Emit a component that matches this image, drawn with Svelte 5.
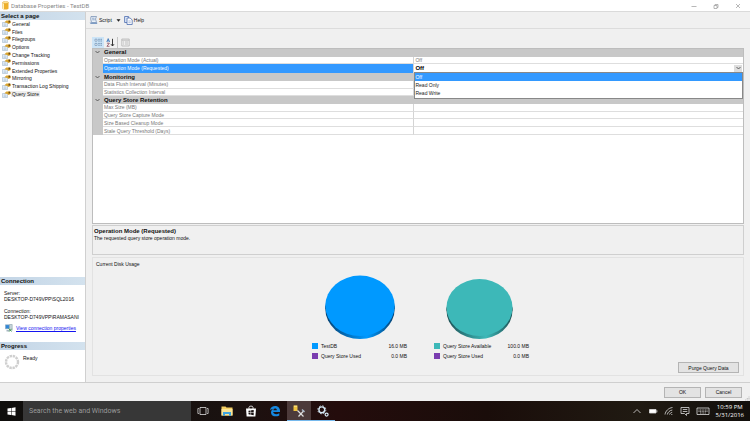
<script>
  const pages = [
    "General",
    "Files",
    "Filegroups",
    "Options",
    "Change Tracking",
    "Permissions",
    "Extended Properties",
    "Mirroring",
    "Transaction Log Shipping",
    "Query Store",
  ];

  const rows = [
    { group: "General" },
    { name: "Operation Mode (Actual)", value: "Off" },
    { name: "Operation Mode (Requested)", editor: true },
    { group: "Monitoring" },
    { name: "Data Flush Interval (Minutes)" },
    { name: "Statistics Collection Interval" },
    { group: "Query Store Retention" },
    { name: "Max Size (MB)" },
    { name: "Query Store Capture Mode" },
    { name: "Size Based Cleanup Mode" },
    { name: "Stale Query Threshold (Days)" },
  ];

  const modes = ["Off", "Read Only", "Read Write"];

  const charts = [
    {
      id: "db",
      color: "#0099ff",
      dark: "#07406f",
      cx: 36,
      rx: 34.7,
      ry: 30.2,
      items: [
        { label: "TestDB", size: "16.0 MB", color: "#0099ff" },
        { label: "Query Store Used", size: "0.0 MB", color: "#7a3db0" },
      ],
    },
    {
      id: "qs",
      color: "#3db8b8",
      dark: "#1d5054",
      cx: 33.5,
      rx: 33,
      ry: 28.5,
      items: [
        { label: "Query Store Available", size: "100.0 MB", color: "#3db8b8" },
        { label: "Query Store Used", size: "0.0 MB", color: "#7a3db0" },
      ],
    },
  ];

  let page = $state("Query Store");
  let mode = $state("Off");
  let open = $state(true);

  function pick(value) {
    mode = value;
    open = false;
  }
</script>

<div class="desktop">
  <div class="window">
    <header class="titlebar">
      <svg class="db-icon" viewBox="0 0 7 9" aria-hidden="true">
        <path d="M0.5 1.5v6c0 1.4 6 1.4 6 0v-6z" fill="#eeb02c" />
        <path d="M1.5 2v6" stroke="#fff0b8" />
        <ellipse cx="3.5" cy="1.5" rx="3" ry="1.1" fill="#ffe394" stroke="#d89a20" stroke-width="0.4" />
      </svg>
      <h1>Database Properties - TestDB</h1>
      <div class="caption">
        <button type="button" aria-label="Minimize">
          <svg viewBox="0 0 6 6"><path d="M0.5 3.5h5" /></svg>
        </button>
        <button type="button" aria-label="Restore">
          <svg viewBox="0 0 6 6"><path d="M1 2.5h3v3H1zM2 2.5v-1h3v3H4" /></svg>
        </button>
        <button type="button" aria-label="Close">
          <svg viewBox="0 0 6 6"><path d="M1 1l4 4M5 1L1 5" /></svg>
        </button>
      </div>
    </header>

    <div class="content">
      <aside class="sidebar">
        <h2>Select a page</h2>
        <ul class="pages">
          {#each pages as name}
            <li>
              <button type="button" class:active={page === name} onclick={() => (page = name)}>
                <svg viewBox="0 0 9 7" aria-hidden="true">
                  <path d="M0.5 2.5h5v4h-5z" fill="#eef5fb" stroke="#9fb6cb" stroke-width="0.6" />
                  <path d="M1.5 4h3M1.5 5.3h3" stroke="#7f9fc0" stroke-width="0.5" />
                  <path d="M2.4 2.2l2-1.7h3.4l0.8 1v1.6l-2 0.8-1.4-0.9z" fill="#dba52f" />
                  <path d="M6.5 0.6h1.8v2H6.5z" fill="#6b4c15" />
                </svg>
                <span>{name}</span>
              </button>
            </li>
          {/each}
        </ul>

        <section class="connection">
          <h2>Connection</h2>
          <dl>
            <dt>Server:</dt>
            <dd>DESKTOP-D749VPP\SQL2016</dd>
            <dt>Connection:</dt>
            <dd>DESKTOP-D749VPP\RAMASANI</dd>
          </dl>
          <a href="#connection">
            <svg viewBox="0 0 8 8" aria-hidden="true">
              <path d="M0.4 0.8h4v4h-4z" fill="#2f86d8" stroke="#8fa9bd" stroke-width="0.6" />
              <path d="M4.6 0.5h2.6v5.8H4.6z" fill="#c9d6dd" stroke="#7b929f" stroke-width="0.5" />
              <path d="M1.5 6.2h3v1.2h-3z" fill="#8da2b0" />
              <path d="M3.6 4.6l2.9 2.9M6.5 4.8L4.2 7.5" stroke="#3f9d4c" stroke-width="0.9" />
            </svg>
            <span>View connection properties</span>
          </a>
        </section>

        <section class="progress">
          <h2>Progress</h2>
          <div class="status">
            <svg viewBox="0 0 16 16" aria-hidden="true">
              <circle cx="8" cy="8" r="6" fill="none" stroke="#cfcfcf" stroke-width="2.4" stroke-dasharray="2.4 0.74" />
            </svg>
            <span>Ready</span>
          </div>
        </section>
      </aside>

      <main>
        <div class="toolbar">
          <button type="button">
            <svg viewBox="0 0 9 9" aria-hidden="true">
              <path d="M2 0.5h5.5l-1 2.5 1 3.5H2.5L1.7 3z" fill="#eaf1f9" stroke="#6b87ad" stroke-width="0.7" />
              <path d="M0.6 6.5h7.6v1.6H1.6z" fill="#7e9cc4" />
              <path d="M3 2.2h2.6M3.2 3.8h2.6" stroke="#5879a8" stroke-width="0.6" />
            </svg>
            Script
          </button>
          <button type="button" class="drop" aria-label="Script options">
            <svg viewBox="0 0 5 3"><path d="M0.5 0.3h4L2.5 2.8z" fill="#222" /></svg>
          </button>
          <button type="button">
            <svg viewBox="0 0 9 9" aria-hidden="true">
              <path d="M0.6 0.5h4v6h-4z" fill="#dfe9f7" stroke="#4d6db0" stroke-width="0.8" />
              <path d="M3 2h3.2l2 2v4.5H3z" fill="#fff" stroke="#4d6db0" stroke-width="0.8" />
              <path d="M4.3 5h2.5M4.3 6.7h2.5" stroke="#7b94c8" stroke-width="0.6" />
            </svg>
            Help
          </button>
        </div>

        <div class="options">
          <div class="sorting">
            <button type="button" class="pressed" aria-label="Categorized">
              <svg viewBox="0 0 9 9" aria-hidden="true">
                <path d="M1 1.2h2v2H1zM1 5.4h2v2H1z" fill="#fff" stroke="#5b7fa8" stroke-width="0.6" />
                <path d="M4.2 1.3h1.6M6.4 1.3H8M4.2 3h1.6M6.4 3H8M4.2 5.4h1.6M6.4 5.4H8M4.2 7.2h1.6M6.4 7.2H8" stroke="#54799f" stroke-width="0.7" />
              </svg>
            </button>
            <button type="button" aria-label="Alphabetical">
              <svg viewBox="0 0 9 9" aria-hidden="true">
                <path d="M0.8 4l1.4-3.4L3.6 4M1.3 2.9h1.8" fill="none" stroke="#2b6cb5" stroke-width="0.8" />
                <path d="M0.9 5.2h2.5L0.9 8.3h2.6" fill="none" stroke="#8b4a5c" stroke-width="0.8" />
                <path d="M6.5 0.8v7M5 6.2l1.5 1.8L8 6.2" fill="none" stroke="#222" stroke-width="0.9" />
              </svg>
            </button>
            <button type="button" class="pages-button" aria-label="Property pages" disabled>
              <svg viewBox="0 0 9 9" aria-hidden="true">
                <path d="M0.8 1h7.4v7H0.8z" fill="#eee" stroke="#b5b5b5" stroke-width="0.8" />
                <path d="M0.8 2.2h7.4M2 4h1M4 4h3M2 6h1M4 6h3" stroke="#b5b5b5" stroke-width="0.8" />
              </svg>
            </button>
          </div>

          <div class="grid">
            <table>
              <colgroup>
                <col class="gutter-col" />
                <col />
                <col class="value-col" />
              </colgroup>
              <tbody>
                {#each rows as row}
                  {#if row.group}
                    <tr class="group">
                      <td class="gutter">
                        <svg viewBox="0 0 5 4" aria-hidden="true"><path d="M0.5 1l2 2 2-2" /></svg>
                      </td>
                      <th colspan="2" scope="colgroup">{row.group}</th>
                    </tr>
                  {:else}
                    <tr class:selected={row.editor}>
                      <td class="gutter"></td>
                      <th scope="row">{row.name}</th>
                      <td>
                        {#if row.editor}
                          <div class="combo">
                            <span>{mode}</span>
                            <button type="button" aria-label="Open list" aria-expanded={open} onclick={() => (open = !open)}>
                              <svg viewBox="0 0 5 4"><path d="M0.5 1l2 2 2-2" /></svg>
                            </button>
                            {#if open}
                              <ul class="menu" role="listbox" aria-label={row.name}>
                                {#each modes as item}
                                  <li role="option" aria-selected={mode === item}>
                                    <button type="button" onclick={() => pick(item)}>{item}</button>
                                  </li>
                                {/each}
                              </ul>
                            {/if}
                          </div>
                        {:else}
                          {row.value ?? ""}
                        {/if}
                      </td>
                    </tr>
                  {/if}
                {/each}
              </tbody>
            </table>
          </div>

          <div class="description">
            <h3>Operation Mode (Requested)</h3>
            <p>The requested query store operation mode.</p>
          </div>

          <section class="usage">
            <h3>Current Disk Usage</h3>
            <div class="charts">
              {#each charts as chart}
                <figure>
                  <svg class="pie" viewBox="0 0 72 66" aria-hidden="true">
                    <defs>
                      <linearGradient id={chart.id}>
                        <stop offset="0" stop-color={chart.dark} />
                        <stop offset="0.6" stop-color={chart.color} />
                        <stop offset="1" stop-color={chart.dark} />
                      </linearGradient>
                    </defs>
                    <ellipse cx={chart.cx} cy={65 - chart.ry} rx={chart.rx} ry={chart.ry} fill="url(#{chart.id})" />
                    <path
                      d="M{chart.cx - chart.rx} {62 - chart.ry}v3h{chart.rx * 2}v-3z"
                      fill="url(#{chart.id})"
                    />
                    <ellipse cx={chart.cx} cy={62 - chart.ry} rx={chart.rx} ry={chart.ry} fill={chart.color} />
                  </svg>
                  <figcaption>
                    {#each chart.items as item}
                      <i style:background={item.color}></i>
                      <span>{item.label}</span>
                      <b>{item.size}</b>
                    {/each}
                  </figcaption>
                </figure>
              {/each}
            </div>
            <button type="button" class="push purge">Purge Query Data</button>
          </section>
        </div>
      </main>
    </div>

    <footer>
      <button type="button" class="push">OK</button>
      <button type="button" class="push">Cancel</button>
      <svg class="grip" viewBox="0 0 5 5" aria-hidden="true">
        <path d="M3.500 0.500h1v1h-1zM1.800 2h1v1h-1zM3.500 2h1v1h-1zM0.200 3.500h1v1h-1zM1.800 3.500h1v1h-1zM3.500 3.500h1v1h-1z" fill="#bbb" />
      </svg>
    </footer>
  </div>

  <nav class="taskbar" aria-label="Taskbar">
    <button type="button" class="start" aria-label="Start">
      <svg viewBox="0 0 9 9"><path d="M0.5 1.6L4 1v3.2H0.5zM4.5 0.9L8.5 0.3v3.9h-4zM0.5 4.8H4V8L0.5 7.4zM4.5 4.8h4v3.9l-4-0.6z" fill="#fff" /></svg>
    </button>
    <input type="search" aria-label="Search" placeholder="Search the web and Windows" />
    <div class="apps">
      <button type="button" aria-label="Task view">
        <svg viewBox="0 0 12 12"><path d="M3 2.5h6v7H3zM1.9 3.5h-1v5h1M10.1 3.5h1v5h-1" fill="none" stroke="#ddd" stroke-width="0.8" /></svg>
      </button>
      <button type="button" aria-label="File Explorer">
        <svg viewBox="0 0 12 12">
          <path d="M0.5 1.5h4l1 1h6v8h-11z" fill="#f4ce62" />
          <path d="M0.5 4h11v6.5h-11z" fill="#fbe596" />
          <path d="M2 10.7V7h8v3.7H8V8.9H4v1.8z" fill="#3fa4df" />
        </svg>
      </button>
      <button type="button" aria-label="Store">
        <svg viewBox="0 0 12 12">
          <path d="M4 4V2.2c0-1.5 4-1.5 4 0V4" fill="none" stroke="#fff" stroke-width="0.8" />
          <path d="M1 3.5h10l-0.6 8H1.6z" fill="#fff" />
          <path d="M3.5 5.8l2.1-0.4v1.9H3.5zM6.1 5.3l2.6-0.4v2.4H6.1zM3.5 7.8h2.1v1.9l-2.1-0.4zM6.1 7.8h2.6v2.4l-2.6-0.4z" fill="#181010" />
        </svg>
      </button>
      <button type="button" aria-label="Edge">
        <svg viewBox="0 0 12 12"><path d="M1 5.3C1.5 2.3 3.6 1 6.1 1 9.3 1 11 3.2 11 5.8v1.3H4.2c0.2 2.4 3.7 2.8 6.1 1.2v2.2C6.7 12.3 2 11.3 2 7.5 2 5.5 3.2 4.3 4.7 3.7 3.2 3.8 1.9 4.3 1 5.3zM4.3 5.2h3.6C7.9 2.9 4.6 3 4.3 5.2z" fill="#1688e0" fill-rule="evenodd" /></svg>
      </button>
      <button type="button" class="current" aria-label="Management Studio">
        <svg viewBox="0 0 12 12">
          <path d="M0.5 0.5h4v5.500h-4z" fill="#f0c33e" />
          <path d="M1 1.200h3" stroke="#fff1a8" stroke-width="0.8" />
          <path d="M4.500 5.500l6 6M11 5.500L5.500 11.500" stroke="#ddd" stroke-width="1.200" />
          <path d="M9 4.500l2.500 2.500" stroke="#a9b9c9" stroke-width="1.400" />
        </svg>
      </button>
      <button type="button" class="running" aria-label="Services">
        <svg viewBox="0 0 12 12" fill="none" stroke="#d5e8f5">
          <circle cx="4.800" cy="4.800" r="2.900" stroke-width="1.400" />
          <circle cx="4.800" cy="4.800" r="4" stroke-width="0.900" stroke-dasharray="1.570 1.570" />
          <circle cx="9.600" cy="9.600" r="1.500" stroke-width="1.200" />
        </svg>
      </button>
    </div>
    <div class="tray">
      <svg viewBox="0 0 10 10"><path d="M1.5 7L5 3.500 8.500 7" /></svg>
      <svg viewBox="0 0 10 10"><path d="M1.5 3.500h6.500v3.500H1.5z" fill="#fff" /><path d="M8.900 4.300v2" /></svg>
      <svg viewBox="0 0 10 10"><path d="M1 8.500C1.500 5 4.500 2 8.500 1.500M3.300 8.500c0.500-2.200 2.200-4 5-4.500M5.500 8.500c0.400-1 1.200-1.900 2.700-2.200M7.300 8.500h1" /></svg>
      <svg viewBox="0 0 10 10"><path d="M1 1.500h8v6H6.500v2l-2-2H1zM2.800 3.500h4.500M2.800 5.500h4.500" /></svg>
      <svg class="keys" viewBox="0 0 14 10"><path d="M1 2h12v6.500H1z" /><path d="M2.500 4h9M2.500 5.400h9M4 7h6" stroke-dasharray="1 0.600" /></svg>
      <time datetime="2016-05-31T22:59">
        <span>10:59 PM</span>
        <span>5/31/2016</span>
      </time>
    </div>
  </nav>
</div>

<style>
  :global(body) {
    margin: 0;
  }

  .desktop {
    display: flex;
    flex-direction: column;
    min-height: 100vh;
    background: #f0f0f0;
    color: #111;
    font: 5px/6px "Liberation Sans", Arial, sans-serif;
  }

  .desktop * {
    box-sizing: border-box;
  }

  button {
    display: flex;
    align-items: center;
    margin: 0;
    padding: 0;
    border: 0;
    background: none;
    color: inherit;
    font: inherit;
  }

  svg {
    display: block;
    flex: none;
  }

  h1,
  h2,
  h3,
  p,
  ul,
  dl,
  dd,
  figure {
    margin: 0;
    padding: 0;
    list-style: none;
  }

  .window,
  .content,
  main,
  .options,
  .grid {
    display: flex;
    flex: 1;
  }

  .window,
  main,
  .options {
    flex-direction: column;
    min-width: 0;
  }

  .titlebar {
    display: flex;
    align-items: center;
    height: 12px;
    padding-left: 2px;
    gap: 2px;
    border-bottom: 1px solid #dadada;
    background: #fff;
  }

  .db-icon {
    width: 7px;
    height: 9px;
  }

  h1 {
    flex: 1;
    color: #888;
    font: 6px/8px Roboto, sans-serif;
  }

  .caption {
    display: flex;
    gap: 16px;
    padding-right: 9px;
  }

  .caption svg {
    width: 6px;
    height: 6px;
    fill: none;
    stroke: #999;
    stroke-width: 0.7;
  }

  .sidebar {
    display: flex;
    flex-direction: column;
    width: 86px;
    overflow: hidden;
    border-right: 1px solid #d0d0d0;
    background: #fff;
  }

  h2 {
    height: 8px;
    padding-left: 1px;
    background: linear-gradient(90deg, #c3d5e6, #d3e2ee);
    color: #111;
    font: bold 6px/8px "Liberation Sans", Arial, sans-serif;
  }

  .pages {
    display: grid;
    grid-auto-rows: 1fr;
    height: 78px;
  }

  .pages li,
  .pages button {
    display: flex;
    align-items: center;
  }

  .pages button {
    padding-left: 2px;
  }

  .pages svg {
    width: 9px;
    height: 7px;
  }

  .pages span {
    padding: 0 1px;
  }

  .pages .active span {
    background: #eee;
  }

  .connection {
    height: 65px;
    margin-top: auto;
  }

  dl {
    padding: 5px 0 0 4px;
    white-space: nowrap;
  }

  dt:not(:first-child) {
    margin-top: 6px;
  }

  .connection a {
    display: flex;
    align-items: center;
    gap: 3px;
    margin: 4px 0 0 5px;
    color: #1414f0;
    white-space: nowrap;
  }

  .connection a svg {
    width: 8px;
    height: 8px;
  }

  .progress {
    height: 40px;
  }

  .status {
    display: flex;
    gap: 3px;
    padding: 4px 4px;
  }

  .status svg {
    width: 16px;
    height: 16px;
  }

  .status span {
    margin-top: 1px;
  }

  .toolbar {
    display: flex;
    align-items: center;
    height: 17px;
    padding: 0 3px;
    border-bottom: 1px solid #dcdcdc;
  }

  .toolbar button {
    gap: 1px;
  }

  .toolbar svg {
    width: 9px;
    height: 9px;
  }

  .toolbar .drop {
    padding: 0 3px 0 4px;
  }

  .toolbar .drop svg {
    width: 5px;
    height: 3px;
  }

  .options {
    padding: 7px 6px 6px;
  }

  .sorting {
    display: flex;
    align-items: center;
    height: 12px;
  }

  .sorting button {
    justify-content: center;
    width: 12px;
    height: 11px;
  }

  .sorting svg {
    width: 9px;
    height: 9px;
  }

  .sorting .pressed {
    background: #cce4f7;
  }

  .sorting .pages-button {
    width: 15px;
    margin-left: 1px;
    border-left: 1px solid #c4c4c4;
  }

  .grid {
    align-items: flex-start;
    min-height: 176px;
    border: 1px solid #bdbdbd;
    background: #fff;
  }

  table {
    width: 100%;
    height: 86px;
    border-spacing: 0;
    table-layout: fixed;
    color: #777;
    line-height: 6px;
  }

  .gutter-col {
    width: 10px;
  }

  .value-col {
    width: 50.7%;
  }

  th,
  td {
    padding: 0 1px;
    border-bottom: 1px solid #dedede;
    font-weight: normal;
    text-align: left;
  }

  td:last-child {
    border-left: 1px solid #d4d4d4;
  }

  tr .gutter {
    padding: 0 0 0 2px;
    border-color: #c8c8c8;
    background: #c8c8c8;
  }

  .group th {
    border-color: #c8c8c8;
    background: #c8c8c8;
    color: #111;
    font-size: 6px;
    font-weight: bold;
  }

  .gutter svg,
  .combo svg {
    width: 5px;
    height: 4px;
    fill: none;
    stroke: #444;
    stroke-width: 0.8;
  }

  .selected th {
    border-color: #3399ff;
    background: #3399ff;
    color: #fff;
  }

  .combo {
    position: relative;
    display: flex;
    align-items: center;
    justify-content: space-between;
    color: #000;
    font-size: 6px;
    font-weight: bold;
  }

  .combo > button {
    justify-content: center;
    width: 8px;
    height: 7px;
    background: #ddd;
  }

  .menu {
    position: absolute;
    top: 100%;
    right: -1px;
    left: -1px;
    z-index: 1;
    padding-bottom: 1px;
    border: 1px solid #888;
    background: #fff;
    color: #222;
    font-size: 5px;
    font-weight: normal;
  }

  .menu button {
    width: 100%;
    height: 8px;
  }

  .menu [aria-selected="true"] {
    background: #3399ff;
    color: #fff;
  }

  h3 {
    color: #111;
    font: bold 6px/7px "Liberation Sans", Arial, sans-serif;
  }

  .description {
    height: 30px;
    margin-top: 1px;
    padding: 2px 1px;
    border: 1px solid #cfcfcf;
  }

  .usage {
    display: flex;
    flex-direction: column;
    height: 119px;
    margin-top: 2px;
    padding: 3px 4px 2px 3px;
    border: 1px solid #e2e2e2;
  }

  .usage h3 {
    font-size: 5px;
    font-weight: normal;
  }

  .charts {
    display: flex;
    justify-content: center;
    gap: 27px;
    margin-top: 6px;
    padding-left: 6px;
  }

  .pie {
    width: 72px;
    height: 66px;
    margin: 0 auto 3px;
  }

  figcaption {
    display: grid;
    grid-template-columns: 6px 1fr auto;
    gap: 4px 3px;
    align-items: center;
    width: 95px;
  }

  figcaption i {
    width: 6px;
    height: 6px;
  }

  figcaption b {
    font-weight: normal;
    text-align: right;
  }

  .push {
    justify-content: center;
    width: 37px;
    height: 11px;
    border: 1px solid #b4b4b4;
    background: #e3e3e3;
  }

  .purge {
    width: 61px;
    margin: auto 0 0 auto;
  }

  footer {
    position: relative;
    display: flex;
    align-items: center;
    justify-content: flex-end;
    gap: 4px;
    height: 19px;
    padding-right: 8px;
    border-top: 1px solid #cfcfcf;
  }

  .grip {
    position: absolute;
    right: 0;
    bottom: 0;
    width: 5px;
    height: 5px;
  }

  .taskbar {
    display: flex;
    align-items: center;
    height: 20px;
    background: linear-gradient(90deg, #0f0e0c, #1a1210 30%, #240c0c 45%, #1a0d0a 65%, #201a12 85%, #120f0c);
    color: #fff;
  }

  .start {
    justify-content: center;
    width: 23px;
    height: 20px;
  }

  .start svg {
    width: 9px;
    height: 9px;
  }

  input {
    width: 168px;
    height: 20px;
    padding: 0 6px;
    border: 0;
    border-radius: 0;
    background: #373737;
    color: #fff;
    font: 7px/10px Roboto, sans-serif;
    appearance: none;
  }

  input::placeholder {
    color: #9a9a9a;
    opacity: 1;
  }

  .apps {
    display: flex;
    flex: 1;
  }

  .apps button {
    justify-content: center;
    width: 24px;
    height: 20px;
    border-bottom: 1px solid transparent;
  }

  .apps svg {
    width: 12px;
    height: 12px;
  }

  .apps .current {
    border-color: #76b9ed;
    background: #4c3a3a;
  }

  .apps .running {
    border-color: #76b9ed;
  }

  .tray {
    display: flex;
    align-items: center;
    gap: 6px;
    padding-right: 6px;
  }

  .tray svg {
    width: 10px;
    height: 10px;
    fill: none;
    stroke: #ddd;
    stroke-width: 0.8;
  }

  .tray .keys {
    width: 14px;
  }

  time {
    display: grid;
    justify-items: center;
    font: 6px/8px "Open Sans", sans-serif;
  }
</style>
